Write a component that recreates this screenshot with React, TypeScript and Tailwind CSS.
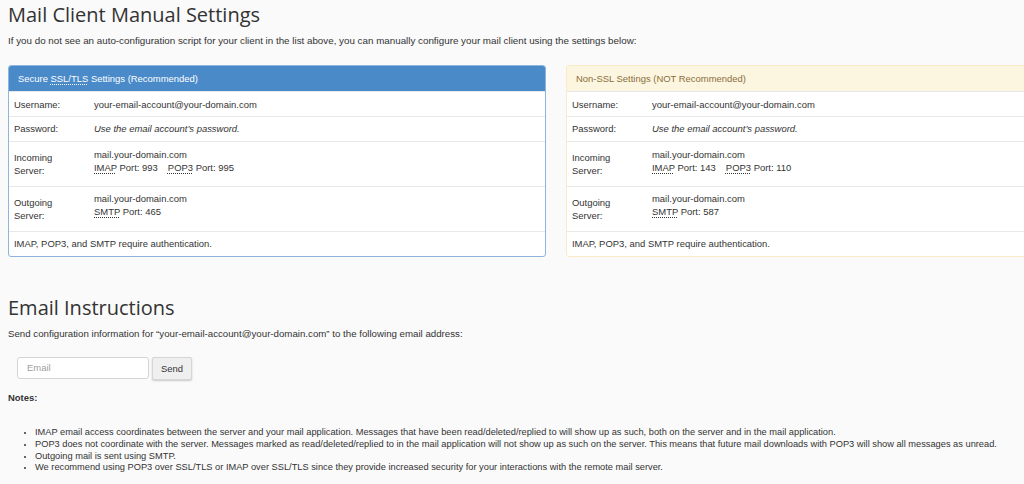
import React from "react";

const Abbr = ({ children }: { children: React.ReactNode }) => (
  <span className="underline decoration-dotted underline-offset-[1.5px]">{children}</span>
);

type PanelProps = {
  variant: "primary" | "warning";
  title: React.ReactNode;
  imapPort: string;
  pop3Port: string;
  smtpPort: string;
};

const Panel = ({ variant, title, imapPort, pop3Port, smtpPort }: PanelProps) => {
  const isPrimary = variant === "primary";
  return (
    <div
      className={
        "w-[538px] shrink-0 rounded-[3px] border bg-white overflow-hidden text-[9.45px] leading-[13px] " +
        (isPrimary ? "border-[#8fb5de]" : "border-[#f8ecc8]")
      }
    >
      <div
        className={
          "h-[25.3px] flex items-center px-[9px] " +
          (isPrimary ? "bg-[#4a8ac9] text-white" : "bg-[#fcf6e0] text-[#8a6d3b]")
        }
      >
        {title}
      </div>
      <div className="flex items-center border-t border-[#e8e8e8]">
        <div className="w-[80px] shrink-0 px-[5px] py-[5.5px]">Username:</div>
        <div className="px-[5px] py-[5.5px]">your-email-account@your-domain.com</div>
      </div>
      <div className="flex items-center border-t border-[#e8e8e8]">
        <div className="w-[80px] shrink-0 px-[5px] py-[5.2px]">Password:</div>
        <div className="px-[5px] py-[5.2px] italic">Use the email account’s password.</div>
      </div>
      <div className="flex items-center border-t border-[#e8e8e8]">
        <div className="w-[80px] shrink-0 px-[5px] py-[6px]">
          Incoming
          <br />
          Server:
        </div>
        <div className="px-[5px] pt-[6px] pb-[12px]">
          <div>mail.your-domain.com</div>
          <div>
            <Abbr>IMAP</Abbr> Port: {imapPort}
            <span className="ml-[10px]">
              <Abbr>POP3</Abbr> Port: {pop3Port}
            </span>
          </div>
        </div>
      </div>
      <div className="flex items-center border-t border-[#e8e8e8]">
        <div className="w-[80px] shrink-0 px-[5px] py-[6px]">
          Outgoing
          <br />
          Server:
        </div>
        <div className="px-[5px] pt-[5px] pb-[13px]">
          <div>mail.your-domain.com</div>
          <div>
            <Abbr>SMTP</Abbr> Port: {smtpPort}
          </div>
        </div>
      </div>
      <div className="border-t border-[#e8e8e8] px-[5px] py-[5.5px]">
        IMAP, POP3, and SMTP require authentication.
      </div>
    </div>
  );
};

export default function App() {
  return (
    <div
      className="w-[1024px] h-[484px] overflow-hidden bg-[#fafafa] text-[#333333] text-[9.45px] leading-[13px]"
      style={{ fontFamily: '"Liberation Sans", Arial, sans-serif' }}
    >
      <div className="px-[8px] pt-[3px]">
        <h1
          className="text-[20px] leading-[24px] font-normal text-[#333333]"
          style={{ fontFamily: '"Open Sans", "Liberation Sans", sans-serif' }}
        >
          Mail Client Manual Settings
        </h1>
        <p className="mt-[6.5px] text-[9.8px]">
          If you do not see an auto-configuration script for your client in the list above, you can manually
          configure your mail client using the settings below:
        </p>
        <div className="mt-[18.5px] flex gap-[20px]">
          <Panel
            variant="primary"
            title={
              <span>
                Secure{" "}
                <span className="underline decoration-dotted underline-offset-[1.5px]">SSL/TLS</span>{" "}
                Settings (Recommended)
              </span>
            }
            imapPort="993"
            pop3Port="995"
            smtpPort="465"
          />
          <Panel
            variant="warning"
            title={<span>Non-SSL Settings (NOT Recommended)</span>}
            imapPort="143"
            pop3Port="110"
            smtpPort="587"
          />
        </div>

        <h2
          className="mt-[39px] text-[20px] leading-[24px] font-normal text-[#333333]"
          style={{ fontFamily: '"Open Sans", "Liberation Sans", sans-serif' }}
        >
          Email Instructions
        </h2>
        <p className="mt-[7px] text-[9.7px]">
          Send configuration information for “your-email-account@your-domain.com” to the following email address:
        </p>
        <div className="mt-[17px] ml-[9px] flex items-start gap-[3px]">
          <input
            type="text"
            placeholder="Email"
            className="w-[132px] h-[22px] rounded-[3px] border border-[#d4d4d4] bg-white px-[9px] text-[9.45px] placeholder:text-[#a0a0a0] outline-none"
          />
          <button className="w-[40px] h-[23px] rounded-[2px] border border-[#d6d6d6] bg-[#efefef] text-[#333333] text-[9.45px] shadow-[0_1px_2px_rgba(0,0,0,0.2)]">
            Send
          </button>
        </div>
        <div className="mt-[11.5px] font-bold">Notes:</div>
        <ul className="mt-[23px] pl-[27px] list-disc text-[9.27px] leading-[11.7px] marker:text-[7px]">
          <li>
            IMAP email access coordinates between the server and your mail application. Messages that have been
            read/deleted/replied to will show up as such, both on the server and in the mail application.
          </li>
          <li>
            POP3 does not coordinate with the server. Messages marked as read/deleted/replied to in the mail
            application will not show up as such on the server. This means that future mail downloads with POP3 will
            show all messages as unread.
          </li>
          <li>Outgoing mail is sent using SMTP.</li>
          <li>
            We recommend using POP3 over SSL/TLS or IMAP over SSL/TLS since they provide increased security for your
            interactions with the remote mail server.
          </li>
        </ul>
      </div>
    </div>
  );
}
